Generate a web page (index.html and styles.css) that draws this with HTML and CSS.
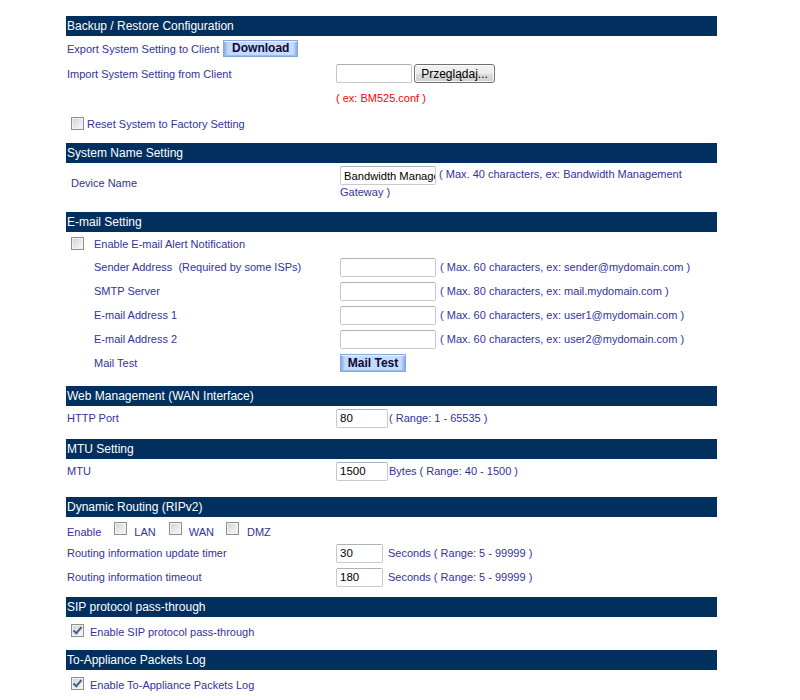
FILE: index.html
```html
<!DOCTYPE html>
<html lang="en">
<head>
<meta charset="utf-8">
<title>Configuration</title>
<link rel="stylesheet" href="styles.css">
</head>
<body>
<div class="page">

  <section class="sec sec-backup">
    <h2 class="hd">Backup / Restore Configuration</h2>
    <div class="row row-25">
      <span class="txt">Export System Setting to Client</span>
      <button class="btn-blue btn-download" type="button">Download</button>
    </div>
    <div class="row row-25">
      <span class="lbl">Import System Setting from Client</span>
      <span class="fld">
        <span class="file-box"></span><button class="btn-win" type="button">Przeglądaj...</button>
      </span>
    </div>
    <div class="row">
      <span class="lbl"></span>
      <span class="fld red">( ex: BM525.conf )</span>
    </div>
    <div class="row row-26 chk-row">
      <input class="cb" type="checkbox">
      <span class="txt txt-low1">Reset System to Factory Setting</span>
    </div>
  </section>

  <section class="sec sec-name">
    <h2 class="hd">System Name Setting</h2>
    <div class="row row-device">
      <span class="lbl lbl-in5">Device Name</span>
      <span class="fld fld-wrap"><input class="inp inp-name" type="text" value="Bandwidth Management Gateway"> ( Max. 40 characters, ex: Bandwidth Management Gateway )</span>
    </div>
  </section>

  <section class="sec sec-mail">
    <h2 class="hd">E-mail Setting</h2>
    <div class="row row-23 chk-row">
      <input class="cb" type="checkbox">
      <span class="txt txt-mailchk">Enable E-mail Alert Notification</span>
    </div>
    <div class="row">
      <span class="lbl lbl-in28">Sender Address &nbsp;(Required by some ISPs)</span>
      <span class="fld"><input class="inp inp-mail" type="text"><span class="hint">( Max. 60 characters, ex: sender@mydomain.com )</span></span>
    </div>
    <div class="row">
      <span class="lbl lbl-in28">SMTP Server</span>
      <span class="fld"><input class="inp inp-mail" type="text"><span class="hint">( Max. 80 characters, ex: mail.mydomain.com )</span></span>
    </div>
    <div class="row">
      <span class="lbl lbl-in28">E-mail Address 1</span>
      <span class="fld"><input class="inp inp-mail" type="text"><span class="hint">( Max. 60 characters, ex: user1@mydomain.com )</span></span>
    </div>
    <div class="row">
      <span class="lbl lbl-in28">E-mail Address 2</span>
      <span class="fld"><input class="inp inp-mail" type="text"><span class="hint">( Max. 60 characters, ex: user2@mydomain.com )</span></span>
    </div>
    <div class="row">
      <span class="lbl lbl-in28">Mail Test</span>
      <span class="fld"><button class="btn-blue btn-mailtest" type="button">Mail Test</button></span>
    </div>
  </section>

  <section class="sec sec-web">
    <h2 class="hd">Web Management (WAN Interface)</h2>
    <div class="row">
      <span class="lbl">HTTP Port</span>
      <span class="fld"><input class="inp inp-port" type="text" value="80"><span class="hint hint-tight">( Range: 1 - 65535 )</span></span>
    </div>
  </section>

  <section class="sec sec-mtu">
    <h2 class="hd">MTU Setting</h2>
    <div class="row">
      <span class="lbl">MTU</span>
      <span class="fld"><input class="inp inp-port" type="text" value="1500"><span class="hint hint-tight">Bytes ( Range: 40 - 1500 )</span></span>
    </div>
  </section>

  <section class="sec sec-rip">
    <h2 class="hd">Dynamic Routing (RIPv2)</h2>
    <div class="row enable-row">
      <span class="txt">Enable</span>
      <input class="cb cb-lan" type="checkbox"><span class="txt">LAN</span>
      <input class="cb cb-wan" type="checkbox"><span class="txt">WAN</span>
      <input class="cb cb-dmz" type="checkbox"><span class="txt">DMZ</span>
    </div>
    <div class="row">
      <span class="lbl">Routing information update timer</span>
      <span class="fld"><input class="inp inp-sec" type="text" value="30"><span class="hint hint-sec">Seconds ( Range: 5 - 99999 )</span></span>
    </div>
    <div class="row">
      <span class="lbl">Routing information timeout</span>
      <span class="fld"><input class="inp inp-sec" type="text" value="180"><span class="hint hint-sec">Seconds ( Range: 5 - 99999 )</span></span>
    </div>
  </section>

  <section class="sec sec-sip">
    <h2 class="hd">SIP protocol pass-through</h2>
    <div class="row row-26 chk-row">
      <input class="cb" type="checkbox" checked>
      <span class="txt txt-chk7">Enable SIP protocol pass-through</span>
    </div>
  </section>

  <section class="sec">
    <h2 class="hd">To-Appliance Packets Log</h2>
    <div class="row row-26 chk-row">
      <input class="cb" type="checkbox" checked>
      <span class="txt txt-chk7">Enable To-Appliance Packets Log</span>
    </div>
  </section>

</div>
</body>
</html>
```

FILE: styles.css
```css
html, body {
  margin: 0;
  padding: 0;
  background: #ffffff;
}

body {
  font-family: "Liberation Sans", Arial, sans-serif;
  font-size: 11px;
  color: #333399;
}

.page {
  width: 651px;
  margin-left: 66px;
  padding-top: 16px;
}

.sec { margin: 0; }
.sec-backup { margin-bottom: 7px; }
.sec-name { margin-bottom: 11px; }
.sec-mail { margin-bottom: 11px; }
.sec-web { margin-bottom: 9px; }
.sec-mtu { margin-bottom: 14px; }
.sec-rip { margin-bottom: 8px; }
.sec-sip { margin-bottom: 7px; }

.hd {
  margin: 0;
  height: 20px;
  line-height: 20px;
  padding-left: 1px;
  background: #01305f;
  color: #ffffff;
  font-size: 12px;
  font-weight: normal;
  white-space: nowrap;
}

.row {
  display: flex;
  align-items: center;
  height: 24px;
  padding-left: 1px;
  white-space: nowrap;
}
.row-23 { height: 23px; }
.row-25 { height: 25px; }
.row-26 { height: 26px; }

.lbl {
  flex: 0 0 auto;
  width: 269px;
}
.lbl-in5 { width: 269px; padding-left: 4px; }
.lbl-in28 { width: 246px; padding-left: 27px; }

.fld {
  display: flex;
  align-items: center;
}

.red { color: #ff0000; }

.txt { display: inline-block; }

/* Buttons */
.btn-blue {
  box-sizing: border-box;
  padding: 0;
  font-family: "Liberation Sans", Arial, sans-serif;
  font-weight: bold;
  font-size: 12px;
  color: #0a0a3a;
  border: 1px solid #86a8e0;
  background: linear-gradient(to right, #86aae6 0, #c3d8fa 4px, #c8dcfb calc(100% - 4px), #86aae6 100%);
  box-shadow: inset 0 1px 0 #e8f0ff, inset 0 -1px 0 #9cbcee;
  cursor: default;
}
.btn-download {
  width: 75px;
  height: 17px;
  margin-left: 4px;
  line-height: 15px;
}
.btn-mailtest {
  width: 66px;
  height: 18px;
  line-height: 16px;
}

.btn-win {
  box-sizing: border-box;
  width: 81px;
  height: 19px;
  margin-left: 2px;
  padding: 0;
  font-family: "Liberation Sans", Arial, sans-serif;
  font-size: 12px;
  color: #000000;
  border: 1px solid #707070;
  border-radius: 3px;
  background: linear-gradient(#f2f2f2 0%, #ebebeb 50%, #dddddd 51%, #cfcfcf 100%);
  box-shadow: inset 0 0 0 1px #fcfcfc;
}

.file-box {
  box-sizing: border-box;
  display: inline-block;
  width: 76px;
  height: 19px;
  border: 1px solid #c4c6cc;
  border-top-color: #abadb3;
  border-radius: 2px;
  background: #ffffff;
}

/* Inputs */
.inp {
  box-sizing: border-box;
  height: 19px;
  margin: 0;
  padding: 0 0 0 3px;
  font-family: "Liberation Sans", Arial, sans-serif;
  font-size: 11.5px;
  color: #000000;
  border: 1px solid #c8cad0;
  border-top-color: #aeb1b8;
  border-radius: 2px;
  background: #ffffff;
  outline: none;
}
.inp-name { width: 96px; vertical-align: middle; font-size: 11.2px; }
.inp-mail { width: 96px; }
.inp-port { width: 52px; }
.inp-sec { width: 47px; }

.hint { margin-left: 4px; }
.hint-tight { margin-left: 1px; }
.hint-sec { margin-left: 5px; }

.row-device {
  height: auto;
  align-items: center;
  padding-top: 3px;
  padding-bottom: 2px;
}
.fld-wrap {
  display: block;
  width: 370px;
  white-space: normal;
  line-height: 14px;
}

/* Checkboxes */
.cb {
  -webkit-appearance: none;
  appearance: none;
  box-sizing: border-box;
  position: relative;
  width: 13px;
  height: 13px;
  margin: 0;
  border: 1px solid #8e8f8f;
  background: linear-gradient(135deg, #cfd2d7 0%, #e6e7ea 50%, #f9f9f9 100%);
  box-shadow: inset 0 0 0 1px #f2f2f2;
  flex: 0 0 auto;
}
.cb:checked::after {
  content: "";
  position: absolute;
  left: 3px;
  top: 0px;
  width: 3px;
  height: 7px;
  border-right: 2px solid #4a5e8e;
  border-bottom: 2px solid #4a5e8e;
  transform: rotate(40deg);
}

.chk-row .cb { margin-left: 4px; margin-right: 3px; }
.txt-mailchk { margin-left: 7px; }
.chk-row .txt-chk7 { margin-left: 3px; padding-top: 4px; }
.txt-low1 { padding-top: 2px; }

.enable-row {
  align-items: flex-end;
  padding-bottom: 3px;
  box-sizing: border-box;
}
.enable-row .cb { margin-right: 7px; margin-bottom: 3px; }
.cb-lan { margin-left: 13px; }
.cb-wan { margin-left: 13px; }
.cb-dmz { margin-left: 12px; }
.enable-row .cb-dmz { margin-right: 8px; }
```
